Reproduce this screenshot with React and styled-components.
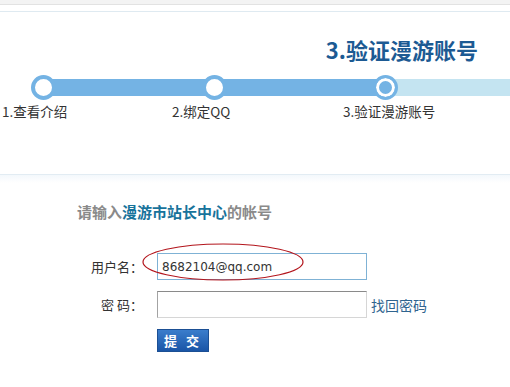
import React from "react";
import styled, { createGlobalStyle } from "styled-components";

const GlobalStyle = createGlobalStyle`
  body {
    margin: 0;
    background: #fff;
    font-family: "Noto Sans CJK SC", "Noto Sans", sans-serif;
  }
`;

const steps = ["1.查看介绍", "2.绑定QQ", "3.验证漫游账号"];

const App = () => {
  return (
    <Page>
      <GlobalStyle />
      <TopBar />
      <Divider />
      <StepTitle>3.验证漫游账号</StepTitle>
      <Track>
        <Dot />
        <Dot />
        <Dot active />
      </Track>
      <StepLabels>
        {steps.map((s) => (
          <StepLabel key={s}>{s}</StepLabel>
        ))}
      </StepLabels>
      <SectionLine />
      <Form>
        <Heading>
          请输入<Strong>漫游市站长中心</Strong>的帐号
        </Heading>
        <Row first>
          <Label>用户名：</Label>
          <Input focused defaultValue="8682104@qq.com" />
          <Mark viewBox="0 0 162 38">
            <ellipse cx="81" cy="19" rx="80" ry="18" fill="none" stroke="#b3151c" strokeWidth="1.2" />
          </Mark>
        </Row>
        <Row>
          <Label>密 码：</Label>
          <Input type="password" />
          <Forgot href="#">找回密码</Forgot>
        </Row>
        <Submit>提 交</Submit>
      </Form>
    </Page>
  );
};

const Page = styled.div`
  width: 510px;
  height: 387px;
  overflow: hidden;
`;

const TopBar = styled.div`
  height: 4px;
  background: #f3f3f3;
  border-bottom: 1px solid #e2e2e2;
`;

const Divider = styled.div`
  margin-top: 6px;
  height: 1px;
  background: #dfeaf1;
`;

const StepTitle = styled.div`
  margin-top: 24px;
  padding-right: 32px;
  text-align: right;
  font-size: 22px;
  line-height: 26px;
  font-weight: 700;
  color: #1c5a93;
`;

const Track = styled.div`
  margin-top: 13px;
  height: 25px;
  display: flex;
  gap: 146px;
  padding-left: 31px;
  background: linear-gradient(
      to right,
      transparent 43px,
      #74b3e4 43px,
      #74b3e4 384px,
      #c4e4f1 384px
    )
    center / 100% 17px no-repeat;
`;

const Dot = styled.div`
  width: 25px;
  height: 25px;
  box-sizing: border-box;
  border-radius: 50%;
  border: ${(p) => (p.active ? "3px" : "4px")} solid #74b3e4;
  background: ${(p) => (p.active ? "#74b3e4" : "#fff")};
  box-shadow: ${(p) => (p.active ? "inset 0 0 0 3px #fff" : "none")};
`;

const StepLabels = styled.div`
  margin-top: 2px;
  padding-left: 2px;
  display: grid;
  grid-template-columns: 170px 171px auto;
`;

const StepLabel = styled.span`
  font-size: 13.5px;
  line-height: 18px;
  color: #333;
`;

const SectionLine = styled.div`
  margin-top: 54px;
  height: 8px;
  border-top: 1px solid #e2ecf3;
  background: linear-gradient(#f3f8fc, #fff);
`;

const Form = styled.div`
  padding-top: 19px;
`;

const Heading = styled.div`
  padding-left: 77px;
  font-size: 15px;
  line-height: 20px;
  font-weight: 700;
  color: #8a8a8a;
`;

const Strong = styled.span`
  color: #18739b;
`;

const Row = styled.div`
  position: relative;
  display: flex;
  align-items: center;
  margin-top: ${(p) => (p.first ? "31px" : "11px")};
`;

const Label = styled.span`
  width: 143px;
  text-align: right;
  margin-right: 14px;
  font-size: 13px;
  color: #333;
`;

const Input = styled.input`
  width: 210px;
  height: 27px;
  box-sizing: border-box;
  padding: 0 4px;
  outline: none;
  font-family: "DejaVu Sans", sans-serif;
  font-size: 12px;
  color: #333;
  background: #fff;
  border: 1px solid ${(p) => (p.focused ? "#7fb2d5" : "#d6d6d6")};
  border-top-color: ${(p) => (p.focused ? "#7fb2d5" : "#8a8a8a")};
  border-left-color: ${(p) => (p.focused ? "#7fb2d5" : "#a3a3a3")};
`;

const Mark = styled.svg`
  position: absolute;
  left: 142px;
  top: -10px;
  width: 162px;
  height: 38px;
  pointer-events: none;
`;

const Forgot = styled.a`
  margin-left: 4px;
  font-size: 14px;
  color: #2f648f;
  text-decoration: none;
`;

const Submit = styled.button`
  display: block;
  margin: 11px 0 0 157px;
  width: 52px;
  height: 23px;
  padding: 0;
  border: 1px solid #1b4f94;
  background: linear-gradient(#3a7dcc, #1a55a6);
  color: #fff;
  font-family: "Noto Sans CJK SC", sans-serif;
  font-size: 13px;
  font-weight: 700;
  letter-spacing: 3px;
  cursor: pointer;
`;

export default App;
